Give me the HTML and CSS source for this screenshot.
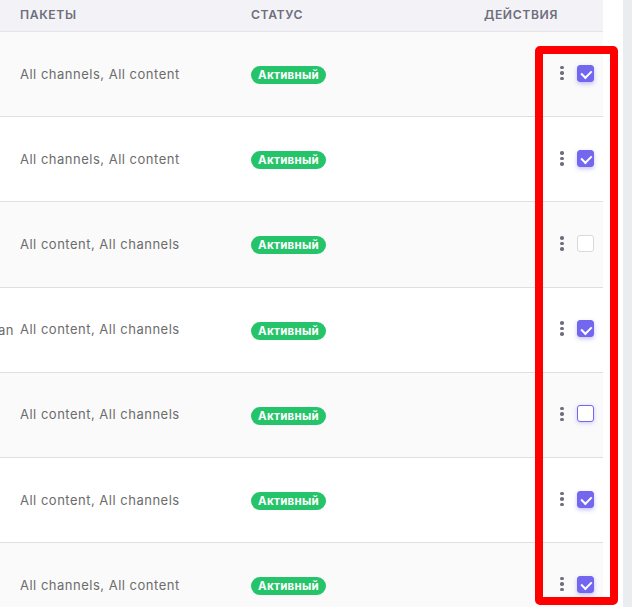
FILE: index.html
```html
<!DOCTYPE html>
<html lang="ru">
<head>
<meta charset="utf-8">
<link rel="stylesheet" href="styles.css">
</head>
<body>
<div class="page">
  <div class="table">
    <div class="row head">
      <div class="cell prev"></div>
      <div class="cell">Пакеты</div>
      <div class="cell">Статус</div>
      <div class="cell actions-h">Действия</div>
    </div>

    <div class="row odd">
      <div class="cell prev"></div>
      <div class="cell pk">All channels, All content</div>
      <div class="cell"><span class="badge">Активный</span></div>
      <div class="cell actions"><span class="kebab"><i></i><i></i><i></i></span><span class="cb on"></span></div>
    </div>
    <div class="row">
      <div class="cell prev"></div>
      <div class="cell pk">All channels, All content</div>
      <div class="cell"><span class="badge">Активный</span></div>
      <div class="cell actions"><span class="kebab"><i></i><i></i><i></i></span><span class="cb on"></span></div>
    </div>
    <div class="row odd">
      <div class="cell prev"></div>
      <div class="cell pk">All content, All channels</div>
      <div class="cell"><span class="badge">Активный</span></div>
      <div class="cell actions"><span class="kebab"><i></i><i></i><i></i></span><span class="cb"></span></div>
    </div>
    <div class="row">
      <div class="cell prev"><span class="over">Basic plan</span></div>
      <div class="cell pk">All content, All channels</div>
      <div class="cell"><span class="badge">Активный</span></div>
      <div class="cell actions"><span class="kebab"><i></i><i></i><i></i></span><span class="cb on"></span></div>
    </div>
    <div class="row odd">
      <div class="cell prev"></div>
      <div class="cell pk">All content, All channels</div>
      <div class="cell"><span class="badge">Активный</span></div>
      <div class="cell actions"><span class="kebab"><i></i><i></i><i></i></span><span class="cb focus"></span></div>
    </div>
    <div class="row">
      <div class="cell prev"></div>
      <div class="cell pk">All content, All channels</div>
      <div class="cell"><span class="badge">Активный</span></div>
      <div class="cell actions"><span class="kebab"><i></i><i></i><i></i></span><span class="cb on"></span></div>
    </div>
    <div class="row odd">
      <div class="cell prev"></div>
      <div class="cell pk">All channels, All content</div>
      <div class="cell"><span class="badge">Активный</span></div>
      <div class="cell actions"><span class="kebab"><i></i><i></i><i></i></span><span class="cb on"></span></div>
    </div>
  </div>
  <div class="gutter"></div>
  <div class="scrollbar"></div>
  <div class="highlight"></div>
</div>
</body>
</html>
```
FILE: styles.css
```css
* { box-sizing: border-box; }
html, body { margin: 0; padding: 0; background: #fff; }
body { font-family: "Inter", "Noto Sans", sans-serif; overflow: hidden; }
.page {
  position: relative;
  display: flex;
  width: 632px;
  height: 607px;
  overflow: hidden;
}
.table {
  width: 603px;
  flex: none;
}
.gutter { width: 20px; flex: none; background: #fff; }
.scrollbar { width: 9px; flex: none; background: #ebeced; }
.row {
  display: grid;
  grid-template-columns: 20px 231px 232px 1fr;
  align-items: center;
  height: 85.2px;
  border-bottom: 1px solid #e0e0e2;
  background: #fff;
}
.row.odd { background: #fafafa; }
.row.head {
  height: 32px;
  background: #f3f3f7;
  border-bottom: 1px solid #e4e4ea;
  font-size: 12.2px;
  font-weight: 600;
  letter-spacing: 0.6px;
  text-transform: uppercase;
  color: #6f6e7b;
  padding-bottom: 2px;
}
.cell { white-space: nowrap; }
.prev {
  display: flex;
  justify-content: flex-end;
  overflow: hidden;
  padding-right: 6px;
  font-size: 13px;
  letter-spacing: 0.5px;
  color: #6c6c6c;
}
.over { flex: none; }
.pk {
  font-size: 13px;
  color: #6c6c6c;
  letter-spacing: 0.5px;
  padding-bottom: 1px;
}
.badge {
  display: inline-block;
  background: #26c46a;
  color: #fff;
  font-weight: 700;
  font-size: 11.5px;
  line-height: 18px;
  height: 18px;
  padding: 0 7px;
  border-radius: 9px;
  letter-spacing: 0.3px;
  margin-bottom: 1px;
}
.actions-h { text-align: right; padding-right: 45px; }
.actions {
  display: flex;
  justify-content: flex-end;
  align-items: center;
  padding-right: 9px;
  gap: 13px;
  padding-bottom: 2px;
}
.kebab {
  display: flex;
  flex-direction: column;
  gap: 2px;
  width: 4px;
}
.kebab i {
  display: block;
  width: 3.5px;
  height: 3.5px;
  border-radius: 50%;
  background: #6e6e7c;
}
.cb {
  position: relative;
  width: 17px;
  height: 17px;
  border-radius: 3px;
  border: 1px solid #d9d9df;
  background: #fff;
}
.cb.focus { border-color: #7367f0; box-shadow: 0 1px 4px rgba(115,103,240,0.35); }
.cb.on {
  background: #7367f0;
  border-color: #7367f0;
  box-shadow: 0 2px 4px rgba(115,103,240,0.4);
}
.cb.on::after {
  content: "";
  position: absolute;
  left: 5px;
  top: 2.5px;
  width: 4.5px;
  height: 8px;
  border: solid #fff;
  border-width: 0 2px 2px 0;
  transform: rotate(45deg);
}
.highlight {
  position: absolute;
  left: 535px;
  top: 46px;
  width: 83px;
  height: 559px;
  border: 8px solid #ff0000;
  border-radius: 5px;
}
```
